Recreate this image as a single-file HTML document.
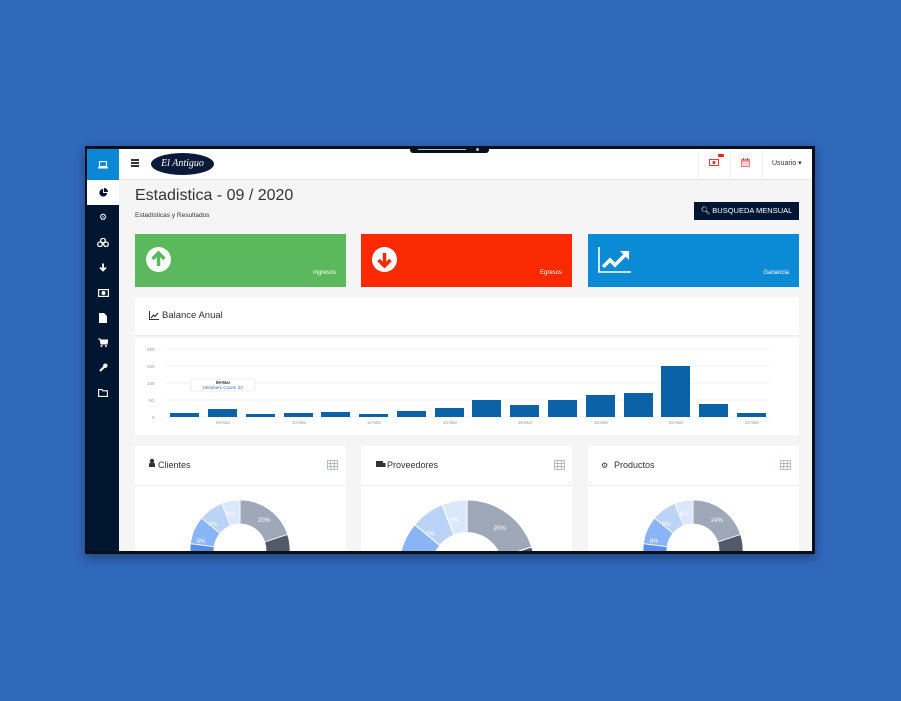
<!DOCTYPE html>
<html><head><meta charset="utf-8"><style>
*{margin:0;padding:0;box-sizing:border-box}
body{width:901px;height:701px;background:#3068bc;font-family:"Liberation Sans",sans-serif;position:relative;overflow:hidden}
.frame{position:absolute;left:85px;top:146px;width:730px;height:408px;background:#0a0f1a;box-shadow:0 4px 10px rgba(0,0,0,.35)}
.notch{position:absolute;left:410px;top:146px;width:79px;height:7px;background:#0a0f1a;border-radius:0 0 3px 3px;z-index:5}
.notch i{position:absolute;left:8px;top:3px;width:48px;height:1px;background:#8fd0f0}
.notch b{position:absolute;left:66px;top:2px;width:3px;height:3px;border-radius:50%;background:#8fd0f0}
.screen{position:absolute;left:87px;top:149px;width:725px;height:402px;background:#f5f5f5;overflow:hidden}
.side{position:absolute;left:0;top:0;width:32px;height:402px;background:#00152f}
.side .top{height:31px;background:#0a87d5;display:flex;align-items:center;justify-content:center}
.side .act{height:25px;background:#fff;display:flex;align-items:center;justify-content:center}
.side .ic{height:25px;display:flex;align-items:center;justify-content:center;color:#fff;font-size:9px}
.hdr{position:absolute;left:32px;top:0;right:0;height:31px;background:#fff;border-bottom:1px solid #e5e5e5}
.abs{position:absolute}
.tile{position:absolute;top:85px;width:211px;height:53px}
.tile span{position:absolute;right:10px;bottom:11px;color:#fff;font-size:6px}
.card{position:absolute;background:#fff}
</style></head><body>
<div class="frame"></div>
<div class="notch"><i></i><b></b></div>
<div class="screen">
 <div class="side">
  <div class="top"><svg width="10" height="8" viewBox="0 0 10 8"><rect x="1.5" y="0.5" width="7" height="5" fill="none" stroke="#fff" stroke-width="1.2"/><rect x="0" y="6" width="10" height="1.5" fill="#fff"/></svg></div>
  <div class="act"><svg width="9" height="9" viewBox="0 0 10 10"><path d="M4.5 1A4.3 4.3 0 1 0 9 5.5H4.5z" fill="#00152f"/><path d="M5.5 0V4.5H10A4.5 4.5 0 0 0 5.5 0z" fill="#00152f"/></svg></div>
  <div class="ic">⚙</div>
  <div class="ic"><svg width="12" height="9" viewBox="0 0 12 9"><circle cx="6" cy="2.5" r="2.3" fill="none" stroke="#fff" stroke-width="1.3"/><circle cx="3" cy="6.3" r="2.3" fill="none" stroke="#fff" stroke-width="1.3"/><circle cx="9" cy="6.3" r="2.3" fill="none" stroke="#fff" stroke-width="1.3"/></svg></div>
  <div class="ic"><svg width="8" height="9" viewBox="0 0 8 9"><path d="M4 0.5V7.5M1 4.5L4 7.5 7 4.5" fill="none" stroke="#fff" stroke-width="1.8"/></svg></div>
  <div class="ic"><svg width="11" height="8" viewBox="0 0 11 8"><rect x="0.6" y="0.6" width="9.8" height="6.8" fill="none" stroke="#fff" stroke-width="1.2"/><circle cx="5.5" cy="4" r="2" fill="#fff"/></svg></div>
  <div class="ic"><svg width="8" height="10" viewBox="0 0 8 10"><path d="M0 0H5L8 3V10H0z" fill="#fff"/></svg></div>
  <div class="ic"><svg width="10" height="9" viewBox="0 0 10 9"><path d="M0 1H2L3 6H9L10 2H2.5" fill="#fff" stroke="#fff"/><circle cx="3.5" cy="8" r="1" fill="#fff"/><circle cx="8" cy="8" r="1" fill="#fff"/></svg></div>
  <div class="ic"><svg width="9" height="9" viewBox="0 0 9 9"><path d="M1 8L5 4" stroke="#fff" stroke-width="2"/><circle cx="6.3" cy="2.7" r="2.2" fill="#fff"/></svg></div>
  <div class="ic"><svg width="10" height="8" viewBox="0 0 10 8"><path d="M0.6 0.6H4L5 1.8H9.4V7.4H0.6z" fill="none" stroke="#fff" stroke-width="1.1"/></svg></div>
 </div>
 <div class="hdr">
  <div class="abs" style="left:12px;top:10px;width:8px;height:1.5px;background:#333;box-shadow:0 3px 0 #333,0 6px 0 #333"></div>
  <div class="abs" style="left:32px;top:4px;width:63px;height:22px;border-radius:50%;background:#0c1a3a;color:#fff;font-family:'Liberation Serif',serif;font-size:10px;font-style:italic;text-align:center;line-height:22px">El Antiguo</div>
  <div class="abs" style="left:579px;top:0;width:1px;height:31px;background:#f0f0f0"></div>
  <div class="abs" style="left:611px;top:0;width:1px;height:31px;background:#f0f0f0"></div>
  <div class="abs" style="left:643px;top:0;width:1px;height:31px;background:#f0f0f0"></div>
  <div class="abs" style="left:599px;top:5px;width:6px;height:3px;background:#f02020;border-radius:1px"></div>
  <svg class="abs" style="left:590px;top:10px" width="10" height="7" viewBox="0 0 10 7"><rect x="0.5" y="0.5" width="9" height="6" fill="none" stroke="#e53935"/><circle cx="5" cy="3.5" r="1.6" fill="#e53935"/></svg>
  <svg class="abs" style="left:622px;top:9px" width="9" height="9" viewBox="0 0 9 9"><rect x="0" y="1" width="9" height="8" fill="#f08080"/><rect x="1" y="3.5" width="7" height="4.5" fill="#fbd0d0"/><rect x="2" y="0" width="1" height="2" fill="#e53935"/><rect x="6" y="0" width="1" height="2" fill="#e53935"/></svg>
  <div class="abs" style="left:653px;top:10px;font-size:7px;color:#333">Usuario ▾</div>
 </div>
 <div class="abs" style="left:48px;top:38px;font-size:16px;color:#333">Estadistica - 09 / 2020</div>
 <div class="abs" style="left:48px;top:63px;font-size:6.5px;color:#333">Estadísticas y Resultados</div>
 <div class="abs" style="left:607px;top:53px;width:105px;height:18px;background:#001533;color:#fff;font-size:7.5px;line-height:18px;text-align:center">&#x1F50D;&#xFE0E; BUSQUEDA MENSUAL</div>
 <div class="tile" style="left:48px;background:#5cb85c"><svg class="abs" style="left:11px;top:13px" width="25" height="25" viewBox="0 0 25 25"><circle cx="12.5" cy="12.5" r="12.5" fill="#fff"/><path d="M12.5 19V6M6.5 12L12.5 6 18.5 12" fill="none" stroke="#5cb85c" stroke-width="3.5"/></svg><span>Ingresos</span></div>
 <div class="tile" style="left:274px;background:#fb2900"><svg class="abs" style="left:11px;top:13px" width="25" height="25" viewBox="0 0 25 25"><circle cx="12.5" cy="12.5" r="12.5" fill="#fff"/><path d="M12.5 6V19M6.5 13L12.5 19 18.5 13" fill="none" stroke="#fb2900" stroke-width="3.5"/></svg><span>Egresos</span></div>
 <div class="tile" style="left:501px;background:#0b8ad6"><svg class="abs" style="left:10px;top:13px" width="34" height="26" viewBox="0 0 34 26"><path d="M1 0V25H33" fill="none" stroke="#fff" stroke-width="1.6"/><path d="M5 20L12 13 17 18 27 8" fill="none" stroke="#fff" stroke-width="3.5"/><path d="M22 4H31V13z" fill="#fff"/></svg><span>Ganancia</span></div>
 <div class="card" style="left:48px;top:148px;width:664px;height:39px;border-bottom:1px solid #eee"><svg class="abs" style="left:14px;top:14px" width="10" height="9" viewBox="0 0 10 9"><path d="M0.5 0V8.5H10" fill="none" stroke="#333"/><path d="M2 7L4.5 4 6 5.5 9 2" fill="none" stroke="#333" stroke-width="1.2"/></svg><div class="abs" style="left:27px;top:13px;font-size:9.5px;color:#333">Balance Anual</div></div>
 <div class="card" style="left:48px;top:189px;width:664px;height:97px">
  <svg width="664" height="97" style="position:absolute;left:0;top:0">
   <g font-size="4.5" fill="#999" font-family="Liberation Sans">
    <text x="12" y="13">200</text><text x="12" y="30">150</text><text x="12" y="47">100</text><text x="14" y="64">50</text><text x="17" y="81">0</text>
   </g>
   <g stroke="#eee" stroke-width="0.7"><line x1="30" y1="11" x2="634" y2="11"/><line x1="30" y1="28" x2="634" y2="28"/><line x1="30" y1="45" x2="634" y2="45"/><line x1="30" y1="62" x2="634" y2="62"/><line x1="30" y1="79" x2="634" y2="79"/></g>
   <g fill="#0b62a6">
    <rect x="35" y="75" width="29" height="4"/><rect x="73" y="71" width="29" height="8"/><rect x="111" y="76" width="29" height="3"/><rect x="149" y="75" width="29" height="4"/><rect x="186" y="74" width="29" height="5"/><rect x="224" y="76" width="29" height="3"/><rect x="262" y="73" width="29" height="6"/><rect x="300" y="70" width="29" height="9"/><rect x="337" y="62" width="29" height="17"/><rect x="375" y="67" width="29" height="12"/><rect x="413" y="62" width="29" height="17"/><rect x="451" y="57" width="29" height="22"/><rect x="489" y="55" width="29" height="24"/><rect x="526" y="28" width="29" height="51"/><rect x="564" y="66" width="29" height="13"/><rect x="602" y="75" width="29" height="4"/>
   </g>
   <g font-size="4.5" fill="#999" font-family="Liberation Sans" text-anchor="middle"><text x="88" y="86">09-Mar</text><text x="164" y="86">10-Mar</text><text x="239" y="86">12-Mar</text><text x="315" y="86">14-Mar</text><text x="390" y="86">16-Mar</text><text x="466" y="86">18-Mar</text><text x="541" y="86">20-Mar</text><text x="617" y="86">22-Mar</text></g>
   <rect x="56" y="41" width="64" height="12" rx="2" fill="#fff" stroke="#dde" stroke-width="0.6"/>
   <text x="88" y="46" font-size="4.5" text-anchor="middle" fill="#333" font-weight="bold" font-family="Liberation Sans">09-Mar</text>
   <text x="88" y="51" font-size="4.5" text-anchor="middle" fill="#3a6fb0" font-family="Liberation Sans">Members Count: 23</text>
  </svg>
 </div>
 <div class="card" style="left:48px;top:297px;width:211px;height:110px"></div>
 <div class="card" style="left:274px;top:297px;width:211px;height:110px"></div>
 <div class="card" style="left:501px;top:297px;width:211px;height:110px"></div>
 <svg class="abs" style="left:0;top:0" width="725" height="402">
  <g stroke="#eee" stroke-width="1"><line x1="48" y1="336.5" x2="259" y2="336.5"/><line x1="274" y1="336.5" x2="485" y2="336.5"/><line x1="501" y1="336.5" x2="712" y2="336.5"/></g>
  <g font-family="Liberation Sans" font-size="9" fill="#333"><text x="71" y="319">Clientes</text><text x="300" y="319">Proveedores</text><text x="527" y="319">Productos</text></g>
  <path d="M62 318V314.5A5 5 0 0 1 68 314.5V318z" fill="#333"/><circle cx="65" cy="312" r="2.2" fill="#333"/>
  <rect x="289" y="312" width="7" height="6" fill="#333"/><rect x="295" y="314" width="3.5" height="4" fill="#333"/>
  <text x="514" y="319" font-size="8" fill="#333">⚙</text>
  <g fill="none" stroke="#9ab" stroke-width="0.7">
   <rect x="240.5" y="311.5" width="10" height="9"/><path d="M240.5 314.5H250.5M240.5 317.5H250.5M243.8 311.5V320.5M247.2 311.5V320.5"/>
   <rect x="467.5" y="311.5" width="10" height="9"/><path d="M467.5 314.5H477.5M467.5 317.5H477.5M470.8 311.5V320.5M474.2 311.5V320.5"/>
   <rect x="693.5" y="311.5" width="10" height="9"/><path d="M693.5 314.5H703.5M693.5 317.5H703.5M696.8 311.5V320.5M700.2 311.5V320.5"/>
  </g>
  <defs>
   <g id="d" stroke="#fff" stroke-width="0.8">
    <path d="M240 500A50 50 0 0 1 287.6 534.5L264.7 542A26 26 0 0 0 240 524z" fill="#9ea8b8"/>
    <path d="M287.6 534.5A50 50 0 0 1 278.3 582L259.9 566.7A26 26 0 0 0 264.7 542z" fill="#525a6a"/>
    <path d="M221.6 503.5A50 50 0 0 1 240 500V524A26 26 0 0 0 230.4 525.8z" fill="#dbe7fb"/>
    <path d="M201.5 518.1A50 50 0 0 1 221.6 503.5L230.4 525.8A26 26 0 0 0 220 533.4z" fill="#bcd3f8"/>
    <path d="M190.4 543.7A50 50 0 0 1 201.5 518.1L220 533.4A26 26 0 0 0 214.2 546.7z" fill="#8ab4f8"/>
    <path d="M201.7 582A50 50 0 0 1 190.4 543.7L214.2 546.7A26 26 0 0 0 220.1 566.7z" fill="#5a8ee8"/>
   </g>
  </defs>
  <g transform="translate(-87,-149)">
   <use href="#d"/>
   <g font-family="Liberation Sans" font-size="6" fill="#fff" text-anchor="middle"><text x="264" y="522">20%</text><text x="231" y="516">6%</text><text x="213" y="526">8%</text><text x="201" y="543">9%</text></g>
   <g transform="translate(467,568) scale(1.36) translate(-240,-550)"><use href="#d"/>
   <g font-family="Liberation Sans" font-size="4.5" fill="#fff" text-anchor="middle"><text x="264" y="522">20%</text><text x="231" y="516">6%</text><text x="213" y="526">7%</text><text x="201" y="543">7%</text></g></g>
   <g transform="translate(453,0)"><use href="#d"/>
   <g font-family="Liberation Sans" font-size="6" fill="#fff" text-anchor="middle"><text x="264" y="522">24%</text><text x="231" y="516">6%</text><text x="213" y="526">6%</text><text x="201" y="543">8%</text></g></g>
  </g>
 </svg>
</div>
</body></html>
